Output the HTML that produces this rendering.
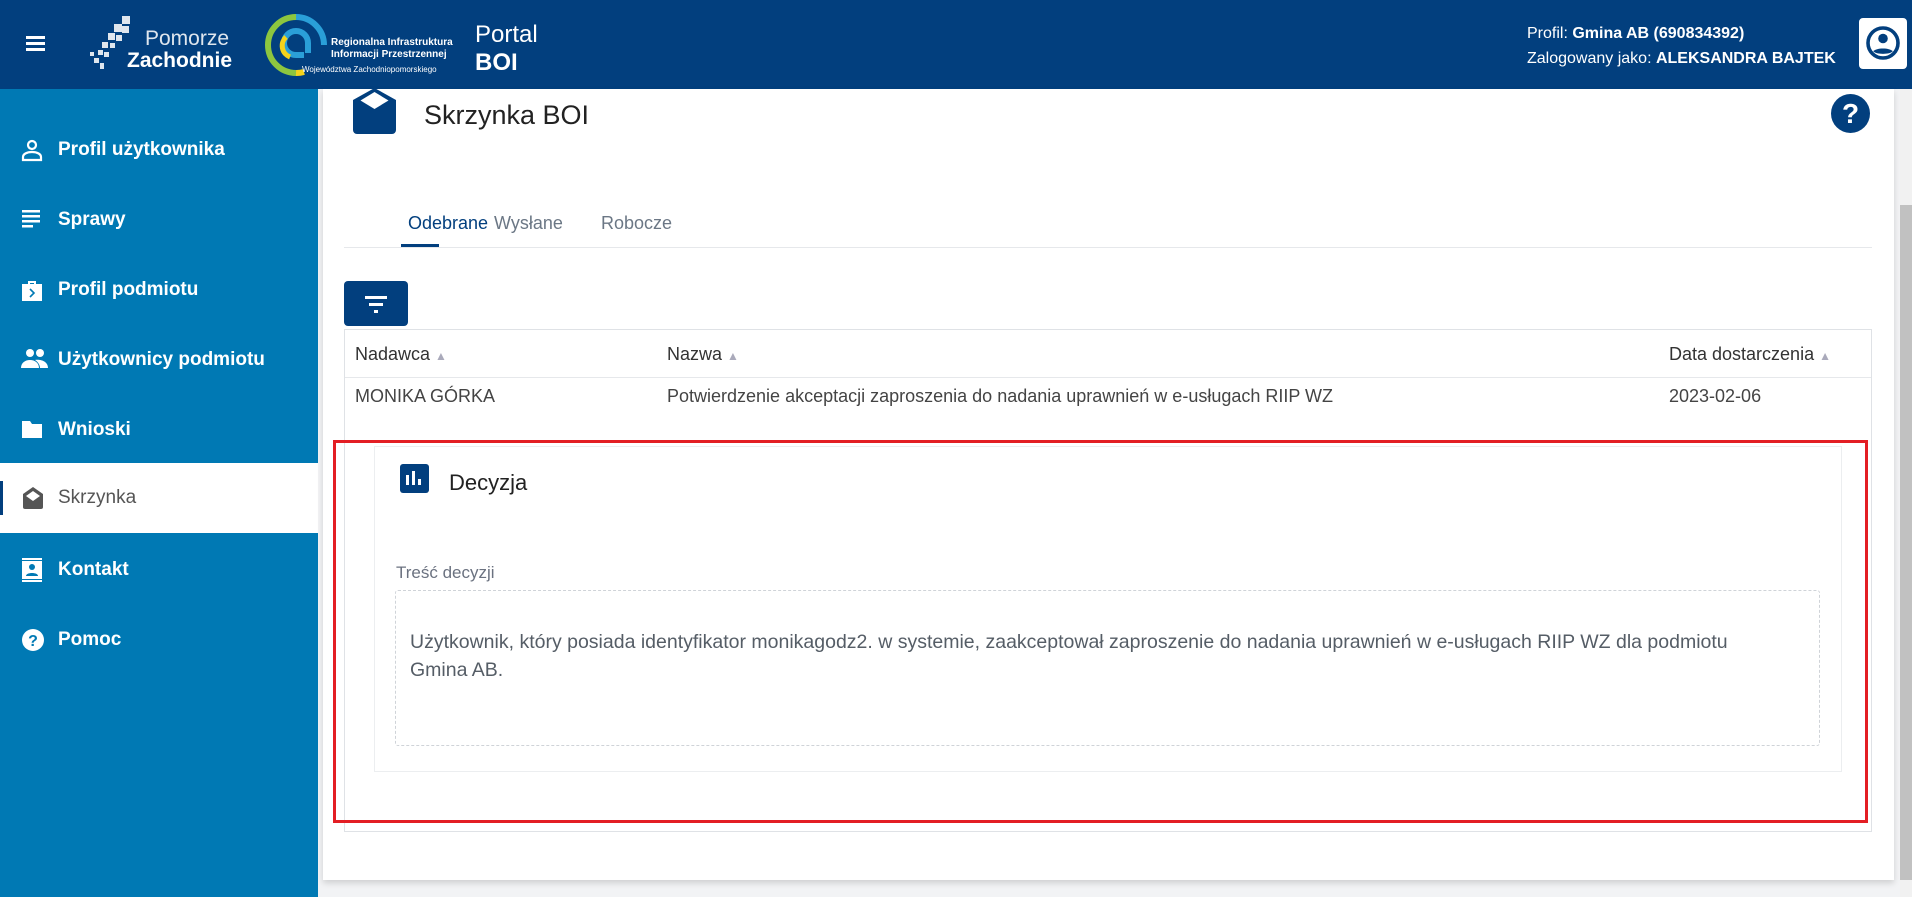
<!DOCTYPE html>
<html><head><meta charset="utf-8"><style>
*{box-sizing:border-box;margin:0;padding:0}
body{width:1912px;height:897px;overflow:hidden;font-family:"Liberation Sans",sans-serif;background:#f2f3f5;position:relative}
.hdr{position:absolute;left:0;top:0;width:1912px;height:89px;background:#023f7e;color:#fff}
.side{position:absolute;left:0;top:89px;width:318px;height:808px;background:#0079b4}
.item{position:absolute;left:0;width:318px;height:70px;color:#fff;font-weight:bold;font-size:19px;display:flex;align-items:center;padding-left:58px}
.item svg{position:absolute;left:21px;top:23px}
.item.act{background:#fff;color:#555;font-weight:normal}
.card{position:absolute;left:323px;top:89px;width:1571px;height:791px;background:#fff;box-shadow:0 3px 6px rgba(0,0,0,.15)}
.abs{position:absolute}
</style></head><body>
<div class="hdr">
  <div class="abs" style="left:26px;top:36px;width:19px;height:3px;background:#fff;box-shadow:0 6px 0 #fff,0 12px 0 #fff"></div>
  <svg class="abs" style="left:88px;top:16px" width="56" height="58" viewBox="0 0 56 58"><g fill="#dfe6ee"><rect x="34" y="0" width="8" height="8"/><rect x="26" y="8" width="8" height="8"/><rect x="34" y="10" width="7" height="7"/><rect x="20" y="17" width="7" height="7"/><rect x="28" y="19" width="6" height="6"/><rect x="14" y="26" width="6" height="6"/><rect x="22" y="27" width="5" height="5"/><rect x="10" y="34" width="5" height="5"/><rect x="16" y="36" width="5" height="5"/><rect x="2" y="36" width="4" height="4"/><rect x="6" y="42" width="5" height="5"/><rect x="12" y="47" width="4" height="6"/></g></svg>
  <div class="abs" style="left:145px;top:28px;font-size:21px;color:#dfe6ee;line-height:22px">Pomorze</div>
  <div class="abs" style="left:127px;top:50px;font-size:21px;font-weight:bold;line-height:22px">Zachodnie</div>
  <svg class="abs" style="left:264px;top:13px" width="64" height="64" viewBox="0 0 64 64"><path d="M32 4 A28 28 0 0 0 32 60" fill="none" stroke="#8dc63f" stroke-width="6"/><path d="M32 4 A28 28 0 0 1 60 32" fill="none" stroke="#2a9fd8" stroke-width="6"/><path d="M32 60 A28 28 0 0 0 40 59" fill="none" stroke="#f5d31b" stroke-width="6"/><path d="M44 40 V30 A12 12 0 1 0 32 42 H40" fill="none" stroke="#2a9fd8" stroke-width="6"/><path d="M26 44 A12 12 0 0 1 22 24" fill="none" stroke="#f5d31b" stroke-width="5"/></svg>
  <div class="abs" style="left:331px;top:37px;font-size:10px;font-weight:bold;line-height:12px">Regionalna Infrastruktura<br>Informacji Przestrzennej</div>
  <div class="abs" style="left:302px;top:65px;font-size:8px;line-height:10px">Województwa Zachodniopomorskiego</div>
  <div class="abs" style="left:475px;top:22px;font-size:24px;line-height:26px">Portal</div>
  <div class="abs" style="left:475px;top:50px;font-size:24px;font-weight:bold;line-height:26px">BOI</div>
  <div class="abs" style="left:1527px;top:21px;font-size:16px;line-height:25px;white-space:nowrap">Profil: <b>Gmina AB (690834392)</b><br>Zalogowany jako: <b>ALEKSANDRA BAJTEK</b></div>
  <div class="abs" style="left:1859px;top:18px;width:48px;height:51px;background:#fff;border-radius:4px"></div>
  <svg class="abs" style="left:1865px;top:25px" width="36" height="36" viewBox="0 0 24 24"><circle cx="12" cy="12" r="10" fill="none" stroke="#023f7e" stroke-width="2.4"/><circle cx="12" cy="9" r="3.2" fill="#023f7e"/><path d="M5.5 17.5c2-2.5 11-2.5 13 0c-2 2.3-11 2.3-13 0z" fill="#023f7e"/></svg>
</div>
<div class="side">
  <div class="item" style="top:26px"><svg width="22" height="24" viewBox="0 0 22 24"><circle cx="11" cy="7" r="4" fill="none" stroke="#fff" stroke-width="2.2"/><path d="M2 22v-3c0-3 4-5 9-5s9 2 9 5v3z" fill="none" stroke="#fff" stroke-width="2.2"/></svg>Profil użytkownika</div>
  <div class="item" style="top:96px"><svg width="22" height="22" viewBox="0 0 22 22"><g fill="#fff"><rect x="1" y="2" width="18" height="2.5"/><rect x="1" y="7" width="18" height="2.5"/><rect x="1" y="12" width="18" height="2.5"/><rect x="1" y="17" width="11" height="2.5"/></g></svg>Sprawy</div>
  <div class="item" style="top:166px"><svg width="22" height="24" viewBox="0 0 22 24"><path d="M7 3h8v3h-2V5h-4v1H7z M1 6h20v17H1z" fill="#fff"/><path d="M9 11l4 4-4 4" fill="none" stroke="#0079b4" stroke-width="1.6"/></svg>Profil podmiotu</div>
  <div class="item" style="top:236px"><svg width="28" height="22" viewBox="0 0 28 22"><g fill="#fff"><circle cx="9" cy="5" r="4"/><circle cx="19" cy="5" r="4"/><path d="M0 20c0-5 4-8 9-8s9 3 9 8z M14 12c5-1 13 1 13 8h-8c0-3-2-6-5-8z"/></g></svg>Użytkownicy podmiotu</div>
  <div class="item" style="top:306px"><svg width="22" height="22" viewBox="0 0 22 22"><path d="M1 3h8l2 3h10v14H1z" fill="#fff"/></svg>Wnioski</div>
  <div class="item act" style="top:374px"><div class="abs" style="left:0;top:18px;width:3px;height:34px;background:#023f7e"></div><svg width="24" height="24" viewBox="0 0 24 24"><path d="M12 1L2 8v13a2 2 0 0 0 2 2h16a2 2 0 0 0 2-2V8z" fill="#555"/><path d="M12 5l7 5-7 5-7-5z" fill="#fff"/></svg>Skrzynka</div>
  <div class="item" style="top:446px"><svg width="22" height="24" viewBox="0 0 22 24"><path d="M1 3h20v18H1z" fill="#fff"/><rect x="1" y="0" width="20" height="2" fill="#fff"/><rect x="1" y="22" width="20" height="2" fill="#fff"/><circle cx="11" cy="9" r="3" fill="#0079b4"/><path d="M5 18c0-4 12-4 12 0z" fill="#0079b4"/></svg>Kontakt</div>
  <div class="item" style="top:516px"><svg width="24" height="24" viewBox="0 0 24 24"><circle cx="12" cy="12" r="11" fill="#fff"/><text x="12" y="18" text-anchor="middle" font-family="Liberation Sans" font-weight="bold" font-size="16" fill="#0079b4">?</text></svg>Pomoc</div>
</div>
<div class="card"></div>
<svg class="abs" style="left:349px;top:88px" width="51" height="46" viewBox="0 0 51 46"><path d="M4 12L25.5 0L47 12V42a4 4 0 0 1-4 4H8a4 4 0 0 1-4-4z" fill="#023f7e"/><path d="M25.5 4l14 8.5-14 8.5-14-8.5z" fill="#fff"/></svg>
<div class="abs" style="left:424px;top:100px;font-size:27px;color:#222">Skrzynka BOI</div>
<div class="abs" style="left:1831px;top:94px;width:39px;height:39px;border-radius:50%;background:#023f7e;color:#fff;font-weight:bold;font-size:28px;text-align:center;line-height:39px">?</div>
<div class="abs" style="left:408px;top:213px;font-size:18px;color:#023f7e">Odebrane</div>
<div class="abs" style="left:494px;top:213px;font-size:18px;color:#6b7785">Wysłane</div>
<div class="abs" style="left:601px;top:213px;font-size:18px;color:#6b7785">Robocze</div>
<div class="abs" style="left:344px;top:247px;width:1528px;height:1px;background:#e6e8eb"></div>
<div class="abs" style="left:401px;top:244px;width:38px;height:3px;background:#023f7e"></div>
<div class="abs" style="left:344px;top:281px;width:64px;height:45px;background:#023f7e;border-radius:4px"></div>
<div class="abs" style="left:365px;top:296px;width:22px;height:3px;background:#fff"></div>
<div class="abs" style="left:369px;top:303px;width:14px;height:3px;background:#fff"></div>
<div class="abs" style="left:374px;top:310px;width:4px;height:3px;background:#fff"></div>
<div class="abs" style="left:344px;top:329px;width:1528px;height:503px;border:1px solid #dfe2e6"></div>
<div class="abs" style="left:345px;top:377px;width:1526px;height:1px;background:#e6e8eb"></div>
<div class="abs" style="left:355px;top:344px;font-size:18px;color:#333">Nadawca <span style="color:#aab;font-size:12px">&#9650;&#xFE0E;</span></div>
<div class="abs" style="left:667px;top:344px;font-size:18px;color:#333">Nazwa <span style="color:#aab;font-size:12px">&#9650;&#xFE0E;</span></div>
<div class="abs" style="left:1669px;top:344px;font-size:18px;color:#333">Data dostarczenia <span style="color:#aab;font-size:12px">&#9650;&#xFE0E;</span></div>
<div class="abs" style="left:355px;top:386px;font-size:18px;color:#444">MONIKA GÓRKA</div>
<div class="abs" style="left:667px;top:386px;font-size:18px;color:#444">Potwierdzenie akceptacji zaproszenia do nadania uprawnień w e-usługach RIIP WZ</div>
<div class="abs" style="left:1669px;top:386px;font-size:18px;color:#444">2023-02-06</div>
<div class="abs" style="left:374px;top:446px;width:1468px;height:326px;border:1px solid #eceef0;background:#fff"></div>
<div class="abs" style="left:333px;top:440px;width:1535px;height:383px;border:3px solid #e31e24"></div>
<svg class="abs" style="left:400px;top:464px" width="29" height="29" viewBox="0 0 29 29"><rect width="29" height="29" rx="3" fill="#023f7e"/><g fill="#fff"><rect x="6" y="11" width="3" height="10"/><rect x="12" y="7" width="3" height="14"/><rect x="18" y="15" width="3" height="6"/></g></svg>
<div class="abs" style="left:449px;top:470px;font-size:22px;color:#222">Decyzja</div>
<div class="abs" style="left:396px;top:563px;font-size:17px;color:#6b7280">Treść decyzji</div>
<div class="abs" style="left:395px;top:590px;width:1425px;height:156px;border:1px dashed #cfd3d8;border-radius:3px"></div>
<div class="abs" style="left:410px;top:628px;width:1380px;font-size:19.5px;line-height:28px;color:#555d66">Użytkownik, który posiada identyfikator monikagodz2. w systemie, zaakceptował zaproszenie do nadania uprawnień w e-usługach RIIP WZ dla podmiotu<br>Gmina AB.</div>
<div class="abs" style="left:1900px;top:89px;width:12px;height:808px;background:#f1f1f1"></div>
<div class="abs" style="left:1900px;top:205px;width:12px;height:675px;background:#c1c1c1"></div>
</body></html>
